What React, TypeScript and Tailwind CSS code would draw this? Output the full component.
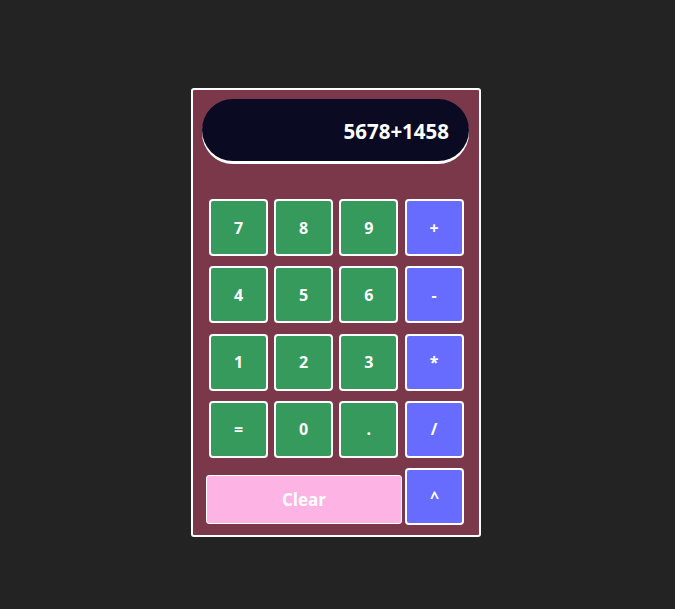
const keys = [
  ['7', '8', '9', '+'],
  ['4', '5', '6', '-'],
  ['1', '2', '3', '*'],
  ['=', '0', '.', '/'],
];

const ops = ['+', '-', '*', '/', '^'];

const Key = ({ label }: { label: string }) => (
  <button
    className={`w-[59px] h-[57px] rounded-[4px] border-2 border-white text-white text-[16px] font-bold ${
      ops.includes(label) ? 'bg-[#676cff]' : 'bg-[#359a5c]'
    }`}
  >
    {label}
  </button>
);

const App = () => {
  return (
    <div
      className="min-h-screen w-full bg-[#232323] pt-[88px] pl-[191px]"
      style={{ fontFamily: '"Open Sans", "Noto Sans", sans-serif' }}
    >
      <div className="w-[290px] h-[449px] rounded-[3px] border-2 border-white bg-[#7b384b] pt-[9px] px-[9px]">
        <div className="h-[62px] w-[267px] rounded-full bg-[#0a0a22] shadow-[0_3px_0_0_#ffffff] flex items-center justify-end pr-[20px] pt-[3px]">
          <span className="text-white text-[20.5px] font-bold">5678+1458</span>
        </div>

        <div className="mt-[38px] pl-[7px] flex flex-col gap-y-[10.25px]">
          {keys.map((row, i) => (
            <div key={i} className="flex gap-x-[6.2px]">
              {row.map((k) => (
                <Key key={k} label={k} />
              ))}
            </div>
          ))}
          <div className="flex items-start">
            <button className="ml-[-3px] mt-[7px] w-[196px] h-[49px] rounded-[3px] border border-white bg-[#fdb3e3] text-white text-[17px] font-bold">
              Clear
            </button>
            <div className="ml-[3px]">
              <Key label="^" />
            </div>
          </div>
        </div>
      </div>
    </div>
  );
};

export default App;
